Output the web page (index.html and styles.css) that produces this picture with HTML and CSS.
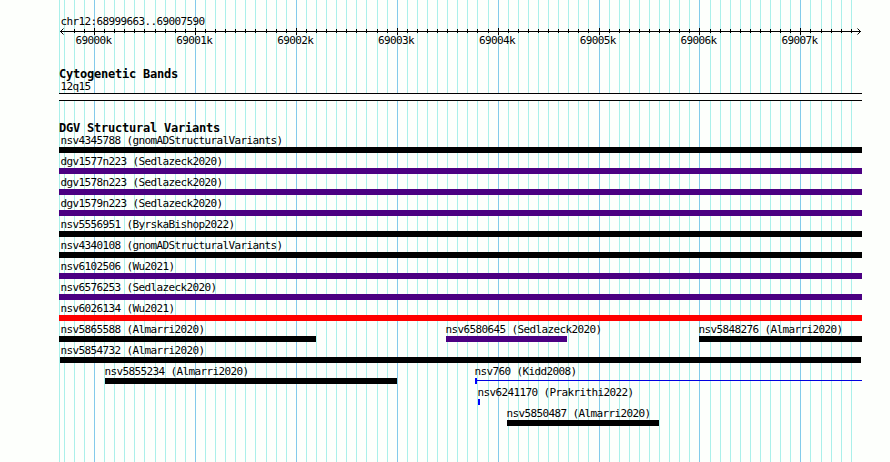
FILE: index.html
```html
<!DOCTYPE html>
<html>

	<head>
		<meta charset="UTF-8">
		<title>chr12:68999663..69007590</title>
		<link rel="stylesheet" href="styles.css">
	</head>

	<body>
		<div class="wrap">
			<svg class="grid" id="grid" width="803" height="462"></svg>

			<div class="ruler">
				<div class="label">chr12:68999663..69007590</div>
				<svg class="axis" id="axis" width="803" height="6">
					<rect x="1" y="3" width="801" height="1" />
					<path d="M4.5 .5L1.5 3.5L4.5 6.5M798.5 .5L801.5 3.5L798.5 6.5" />
				</svg>
				<div class="scale">
					<span>69000k</span>
					<span>69001k</span>
					<span>69002k</span>
					<span>69003k</span>
					<span>69004k</span>
					<span>69005k</span>
					<span>69006k</span>
					<span>69007k</span>
				</div>
			</div>

			<div class="track cyto">
				<div class="title">Cytogenetic Bands</div>
				<div class="label">12q15</div>
				<div class="band"></div>
			</div>

			<div class="track variants">
				<div class="title">DGV Structural Variants</div>
				<div class="row"><div class="item full"><div class="label">nsv4345788 (gnomADStructuralVariants)</div><div class="bar"></div></div></div>
				<div class="row"><div class="item full"><div class="label">dgv1577n223 (Sedlazeck2020)</div><div class="bar purple"></div></div></div>
				<div class="row"><div class="item full"><div class="label">dgv1578n223 (Sedlazeck2020)</div><div class="bar purple"></div></div></div>
				<div class="row"><div class="item full"><div class="label">dgv1579n223 (Sedlazeck2020)</div><div class="bar purple"></div></div></div>
				<div class="row"><div class="item full"><div class="label">nsv5556951 (ByrskaBishop2022)</div><div class="bar"></div></div></div>
				<div class="row"><div class="item full"><div class="label">nsv4340108 (gnomADStructuralVariants)</div><div class="bar"></div></div></div>
				<div class="row"><div class="item full"><div class="label">nsv6102506 (Wu2021)</div><div class="bar purple"></div></div></div>
				<div class="row"><div class="item full"><div class="label">nsv6576253 (Sedlazeck2020)</div><div class="bar purple"></div></div></div>
				<div class="row"><div class="item full"><div class="label">nsv6026134 (Wu2021)</div><div class="bar red"></div></div></div>
				<div class="row">
					<div class="item full" style="width:257px"><div class="label">nsv5865588 (Almarri2020)</div><div class="bar"></div></div>
					<div class="item" style="margin-left:130px;width:121px"><div class="label">nsv6580645 (Sedlazeck2020)</div><div class="bar purple"></div></div>
					<div class="item" style="margin-left:132px;width:163px"><div class="label">nsv5848276 (Almarri2020)</div><div class="bar"></div></div>
				</div>
				<div class="row"><div class="item" style="margin-left:1px;width:801px"><div class="label edge">nsv5854732 (Almarri2020)</div><div class="bar"></div></div></div>
				<div class="row">
					<div class="item" style="margin-left:46px;width:292px"><div class="label">nsv5855234 (Almarri2020)</div><div class="bar"></div></div>
					<div class="item" style="margin-left:78px;width:387px"><div class="label">nsv760 (Kidd2008)</div><div class="bar thin"></div></div>
				</div>
				<div class="row"><div class="item" style="margin-left:419px;width:2px"><div class="label">nsv6241170 (Prakrithi2022)</div><div class="bar blue"></div></div></div>
				<div class="row"><div class="item" style="margin-left:448px;width:152px"><div class="label">nsv5850487 (Almarri2020)</div><div class="bar"></div></div></div>
			</div>
		</div>

		<script type="text/javascript">
			var grid = document.getElementById("grid");
			var axis = document.getElementById("axis");

			function line(svg, name, x, y, h) {
				var r = document.createElementNS("http://www.w3.org/2000/svg", "rect");
				r.setAttribute("class", name);
				r.setAttribute("x", x);
				r.setAttribute("y", y);
				r.setAttribute("width", 1);
				r.setAttribute("height", h);
				svg.appendChild(r);
			}

			line(grid, "minor", 0, 0, 462);
			// one line every 100 bp, 69000k is at 35
			for (var i = -3; i <= 75; i++) {
				var x = 35 + Math.floor(i * 111 / 11 + 0.5);
				if (i % 10 == 0) {
					line(grid, "major", x, 0, 462);
					line(axis, "tick", x, 0, 7);
				} else {
					line(grid, "minor", x, 0, 462);
					if (i > -3) {
						line(axis, "tick", x, 1, 4);
					}
				}
			}
		</script>
	</body>

</html>
```
FILE: styles.css
```css
* {
	margin: 0;
	padding: 0;
}

body {
	background: #fdfffc;
	color: #000;
	overflow: hidden;
}

.wrap {
	position: relative;
	box-sizing: border-box;
	width: 803px;
	height: 462px;
	margin-left: 59px;
	padding-top: 15px;
}

.grid {
	position: absolute;
	left: 0;
	top: 0;
	z-index: -1;
	shape-rendering: crispEdges;
}

.minor {
	fill: #aaf0ea;
}

.major {
	fill: #82cbea;
}

.label,
.scale {
	font: 11px/13px "DejaVu Sans Mono", monospace;
	letter-spacing: -0.622px;
	white-space: nowrap;
	height: 13px;
	text-indent: 0.5px;
}

.ruler .label,
.cyto .label {
	padding-left: 1px;
}

.axis {
	display: block;
	overflow: visible;
}

.axis path {
	fill: none;
	stroke: #000;
}

.scale {
	display: flex;
	gap: 65px;
	padding-left: 16px;
}

.scale span {
	width: 35.85px;
}

.title {
	font: bold 12px/15px "DejaVu Sans Mono", monospace;
	letter-spacing: -0.224px;
	white-space: nowrap;
	height: 13px;
}

.cyto {
	margin-top: 20px;
}

.band {
	box-sizing: border-box;
	height: 8px;
	border-top: 1px solid #000;
	border-bottom: 1px solid #000;
	background: #fdfffc;
}

.variants {
	margin-top: 20px;
}

.row {
	display: flex;
	height: 21px;
}

.item {
	flex: none;
}

.item .label {
	margin-left: -1px;
}

.full {
	width: 803px;
}

.full .label {
	margin-left: 1px;
}

.item .edge {
	margin-left: 0;
}

.bar {
	height: 6px;
	background: #000;
}

.purple {
	background: #4b0082;
}

.red {
	background: #f00;
}

.blue {
	background: #00f;
}

.thin {
	background: linear-gradient(#00f, #00f) 0 0 / 2px 6px no-repeat, linear-gradient(#0000e0, #0000e0) 0 2px / 100% 1px no-repeat;
}
```
